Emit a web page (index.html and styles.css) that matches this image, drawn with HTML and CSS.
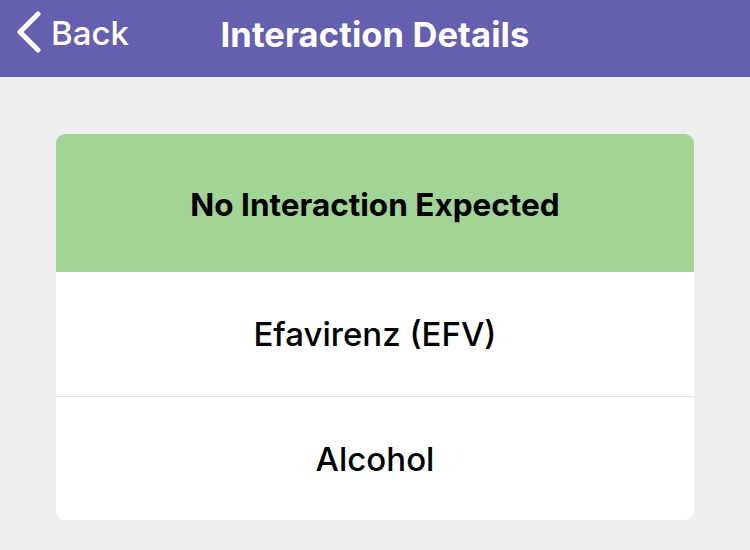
FILE: index.html
```html
<!DOCTYPE html>
<html lang="en">
<head>
<meta charset="utf-8">
<title>Interaction Details</title>
<link rel="stylesheet" href="styles.css">
</head>
<body>
  <header class="navbar">
    <a class="back" href="#">
      <svg class="chevron" width="28" height="42" viewBox="0 0 28 42" aria-hidden="true">
        <path d="M24 3 L6 21 L24 39" fill="none" stroke="#fff" stroke-width="5" stroke-linecap="round" stroke-linejoin="round"/>
      </svg>
      <span>Back</span>
    </a>
    <h1 class="title">Interaction Details</h1>
  </header>

  <main class="content">
    <section class="card">
      <div class="status">No Interaction Expected</div>
      <div class="drug">Efavirenz (EFV)</div>
      <div class="drug">Alcohol</div>
    </section>
  </main>
</body>
</html>
```

FILE: styles.css
```css
* { box-sizing: border-box; }

html, body {
  margin: 0;
  padding: 0;
  background: #efefef;
  font-family: Inter, "Noto Sans", "Liberation Sans", sans-serif;
  color: #000;
}

.navbar {
  position: relative;
  height: 77px;
  padding-bottom: 9px;
  background: #645fae;
  display: flex;
  align-items: center;
  justify-content: center;
}

.back {
  position: absolute;
  left: 14px;
  top: 11px;
  display: flex;
  align-items: center;
  gap: 9px;
  color: #fff;
  text-decoration: none;
  font-size: 33px;
  font-weight: 500;
}

.back span { position: relative; top: 1px; }

.title {
  margin: 0;
  color: #fff;
  font-size: 34.5px;
  font-weight: 700;
  letter-spacing: 0.1px;
}

.content {
  padding: 57px 56px 30px;
}

.card {
  background: #fff;
  border-radius: 9px;
  overflow: hidden;
}

.status {
  height: 138px;
  padding-top: 3px;
  background: #a2d495;
  display: flex;
  align-items: center;
  justify-content: center;
  font-size: 31.5px;
  font-weight: 700;
}

.drug {
  height: 124px;
  display: flex;
  align-items: center;
  justify-content: center;
  font-size: 33px;
  font-weight: 500;
}

.drug + .drug {
  border-top: 1px solid #e2e2e2;
}
```
